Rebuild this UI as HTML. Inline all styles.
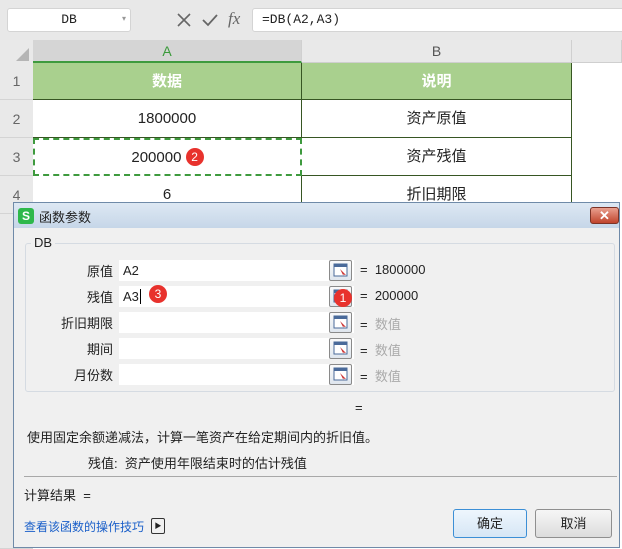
<!DOCTYPE html>
<html><head><meta charset="utf-8"><style>
*{margin:0;padding:0;box-sizing:border-box}
body{width:622px;height:549px;overflow:hidden;background:#fff;font-family:"Liberation Sans","Noto Sans CJK SC",sans-serif;position:relative;font-size:13px;color:#222}
.a{position:absolute}
.top{left:0;top:0;width:622px;height:40px;background:#e8e8e8}
.nb{left:7px;top:8px;width:124px;height:24px;background:#fff;border:1px solid #d4d4d4;border-radius:3px;text-align:center;line-height:22px;font-family:"Liberation Mono","Noto Sans CJK SC",monospace;font-size:13px}
.fb{top:8px;height:24px;background:#fff;border:1px solid #d4d4d4;border-radius:3px;line-height:22px;padding-left:9px;font-family:"Liberation Mono","Noto Sans CJK SC",monospace;font-size:13px}
.ch{top:40px;height:23px;background:#e9e9e9;border-right:1px solid #d0d0d0;text-align:center;line-height:23px;color:#555;font-size:14px}
.rn{left:0;width:33px;background:#e9e9e9;text-align:center;color:#666;font-size:14px;border-bottom:1px solid #d4d4d4}
.c{text-align:center;font-size:15px;border-right:1px solid #375623;border-bottom:1px solid #375623}
.dlg{left:13px;top:202px;width:607px;height:346px;background:#f0f0f0;border:1px solid #6f8aa8}
.lb{width:80px;text-align:right;font-size:13px}
.in{left:105px;width:235px;height:21px;background:#fff;font-size:13px;line-height:21px;padding-left:4px}
.ib{left:315px;width:23px;height:21px;border:1px solid #8a8a8a;border-radius:2px;background:linear-gradient(#fafafa,#dfe6ee)}
.ib svg{position:absolute;left:3px;top:2px}
.eq{left:346px;font-size:13px}
.badge{width:18px;height:18px;border-radius:50%;background:#e8322d;color:#fff;font-size:12px;text-align:center;line-height:18px}
.btn{top:306px;height:29px;border:1px solid #8f8f8f;border-radius:3px;background:linear-gradient(#f6f6f6,#dcdcdc);text-align:center;line-height:27px;font-size:13px}
</style></head><body>
<div class="a top"></div>
<div class="a nb">DB<span style="position:absolute;right:4px;top:0;font-size:8px;color:#999">▾</span></div>
<svg class="a" style="left:176px;top:12px" width="16" height="16"><path d="M2 2L14 14M14 2L2 14" stroke="#666" stroke-width="1.6"/></svg>
<svg class="a" style="left:201px;top:12px" width="18" height="16"><path d="M2 8L7 13L16 3" stroke="#666" stroke-width="1.8" fill="none"/></svg>
<div class="a" style="left:228px;top:9px;font-size:17px;color:#666;font-style:italic;font-family:'Liberation Serif',serif">fx</div>
<div class="a fb" style="left:252px;width:380px">=DB(A2,A3)</div>
<div class="a" style="left:0;top:40px;width:33px;height:23px;background:#e9e9e9"></div>
<div class="a" style="left:16px;top:48px;width:0;height:0;border-left:13px solid transparent;border-bottom:13px solid #b5b5b5"></div>
<div class="a ch" style="left:33px;width:269px;background:#d5d5d5;color:#3a9a3a;border-bottom:2px solid #3e9a3e">A</div>
<div class="a ch" style="left:302px;width:270px;border-bottom:1px solid #cfcfcf">B</div>
<div class="a ch" style="left:572px;width:50px;border-bottom:1px solid #cfcfcf"></div>
<div class="a rn" style="top:63px;height:37px;line-height:37px">1</div>
<div class="a rn" style="top:100px;height:38px;line-height:38px">2</div>
<div class="a rn" style="top:138px;height:38px;line-height:38px">3</div>
<div class="a rn" style="top:176px;height:38px;line-height:38px">4</div>
<div class="a rn" style="top:214px;height:335px"></div>
<div class="a c" style="left:33px;top:63px;width:269px;height:37px;line-height:37px;background:#a9d08e;color:#fff;font-weight:bold">数据</div>
<div class="a c" style="left:302px;top:63px;width:270px;height:37px;line-height:37px;background:#a9d08e;color:#fff;font-weight:bold">说明</div>
<div class="a c" style="left:33px;top:100px;width:269px;height:38px;line-height:38px">1800000</div>
<div class="a c" style="left:302px;top:100px;width:270px;height:38px;line-height:38px">资产原值</div>
<div class="a c" style="left:33px;top:138px;width:269px;height:38px;line-height:36px;border:2px dashed #3e9a3e">200000 <span class="badge" style="display:inline-block;vertical-align:middle;margin-top:-3px">2</span></div>
<div class="a c" style="left:302px;top:138px;width:270px;height:38px;line-height:38px">资产残值</div>
<div class="a c" style="left:33px;top:176px;width:269px;height:38px;line-height:38px">6</div>
<div class="a c" style="left:302px;top:176px;width:270px;height:38px;line-height:38px">折旧期限</div>

<div class="a dlg">
 <div class="a" style="left:0;top:0;width:605px;height:25px;background:linear-gradient(#dde8f3,#c6d6e8)"></div>
 <div class="a" style="left:4px;top:5px;width:16px;height:16px;background:#2eb84b;border-radius:3px;color:#fff;font-size:12px;font-weight:bold;text-align:center;line-height:16px">S</div>
 <div class="a" style="left:25px;top:4px;font-size:13px">函数参数</div>
 <div class="a" style="left:576px;top:4px;width:29px;height:17px;border-radius:3px;background:linear-gradient(#e9a08f,#c0442c);border:1px solid #7c3326;color:#fff;text-align:center;line-height:15px;font-size:13px;font-weight:bold">✕</div>
 <div class="a" style="left:11px;top:40px;width:590px;height:149px;border:1px solid #d5dbe2;border-radius:3px"></div>
 <div class="a" style="left:17px;top:32px;background:#f0f0f0;padding:0 3px">DB</div>
 <div class="a lb" style="left:19px;top:58px">原值</div>
 <div class="a lb" style="left:19px;top:84px">残值</div>
 <div class="a lb" style="left:19px;top:110px">折旧期限</div>
 <div class="a lb" style="left:19px;top:136px">期间</div>
 <div class="a lb" style="left:19px;top:162px">月份数</div>
 <div class="a in" style="top:57px">A2</div>
 <div class="a in" style="top:83px">A3<span style="border-left:1px solid #000;margin-left:1px"></span></div>
 <div class="a in" style="top:109px"></div>
 <div class="a in" style="top:135px"></div>
 <div class="a in" style="top:161px"></div>
 <div class="a ib" style="top:57px"><svg width="16" height="15"><rect x="1" y="1" width="13" height="12" fill="#fff" stroke="#4a6a9a"/><rect x="1" y="1" width="13" height="3" fill="#4a6a9a"/><path d="M7 6L13 12L10 11.5L11 14Z" fill="#c33"/></svg></div>
 <div class="a ib" style="top:83px"><svg width="16" height="15"><rect x="1" y="1" width="13" height="12" fill="#fff" stroke="#4a6a9a"/><rect x="1" y="1" width="13" height="3" fill="#4a6a9a"/><path d="M7 6L13 12L10 11.5L11 14Z" fill="#c33"/></svg></div>
 <div class="a ib" style="top:109px"><svg width="16" height="15"><rect x="1" y="1" width="13" height="12" fill="#fff" stroke="#4a6a9a"/><rect x="1" y="1" width="13" height="3" fill="#4a6a9a"/><path d="M7 6L13 12L10 11.5L11 14Z" fill="#c33"/></svg></div>
 <div class="a ib" style="top:135px"><svg width="16" height="15"><rect x="1" y="1" width="13" height="12" fill="#fff" stroke="#4a6a9a"/><rect x="1" y="1" width="13" height="3" fill="#4a6a9a"/><path d="M7 6L13 12L10 11.5L11 14Z" fill="#c33"/></svg></div>
 <div class="a ib" style="top:161px"><svg width="16" height="15"><rect x="1" y="1" width="13" height="12" fill="#fff" stroke="#4a6a9a"/><rect x="1" y="1" width="13" height="3" fill="#4a6a9a"/><path d="M7 6L13 12L10 11.5L11 14Z" fill="#c33"/></svg></div>
 <div class="a badge" style="left:135px;top:82px">3</div>
 <div class="a badge" style="left:320px;top:86px">1</div>
 <div class="a eq" style="top:59px">=&nbsp; 1800000</div>
 <div class="a eq" style="top:85px">=&nbsp; 200000</div>
 <div class="a eq" style="top:111px">= <span style="color:#aaa">&nbsp;数值</span></div>
 <div class="a eq" style="top:137px">= <span style="color:#aaa">&nbsp;数值</span></div>
 <div class="a eq" style="top:163px">= <span style="color:#aaa">&nbsp;数值</span></div>
 <div class="a" style="left:341px;top:197px">=</div>
 <div class="a" style="left:13px;top:224px">使用固定余额递减法，计算一笔资产在给定期间内的折旧值。</div>
 <div class="a" style="left:74px;top:250px">残值:&nbsp; 资产使用年限结束时的估计残值</div>
 <div class="a" style="left:10px;top:273px;width:593px;height:1px;background:#a8a8a8"></div>
 <div class="a" style="left:10px;top:282px">计算结果 &nbsp;=</div>
 <div class="a" style="left:10px;top:315px;color:#1a5fc9;font-size:12px">查看该函数的操作技巧</div>
 <div class="a" style="left:137px;top:315px;width:14px;height:16px;border:1px solid #333;border-radius:2px;font-size:7px;text-align:center;line-height:16px">▶</div>
 <div class="a btn" style="left:439px;width:74px;border-color:#3c8fd6;background:linear-gradient(#eef6fd,#d6e6f5)">确定</div>
 <div class="a btn" style="left:521px;width:77px">取消</div>
</div>
</body></html>
